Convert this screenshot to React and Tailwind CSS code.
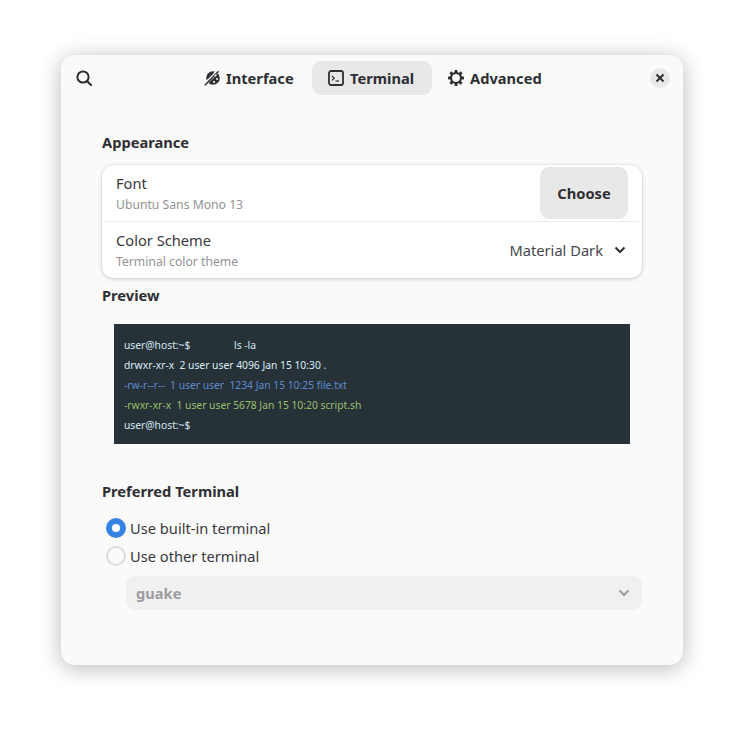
const font = { fontFamily: '"Noto Sans", sans-serif' };

function SearchIcon() {
  return (
    <svg width="16" height="16" viewBox="0 0 16 16" fill="none" stroke="#2e2e33" strokeWidth="2" strokeLinecap="round">
      <circle cx="7" cy="7" r="5.6" />
      <path d="M11.200 11.200l3.800 3.800" />
    </svg>
  );
}

function PaletteIcon() {
  return (
    <svg width="16" height="16" viewBox="0 0 16 16">
      <circle cx="9" cy="8" r="6.800" fill="#2e2e33" />
      <path stroke="#fafafa" strokeWidth="3.600" d="M0 15 15 0" fill="none" />
      <path stroke="#2e2e33" strokeWidth="1.500" d="M.8 15.200 14.600 1.200" fill="none" />
      <path stroke="#2e2e33" strokeWidth="1.200" d="M3 9 9.500 2.500" fill="none" />
      <circle cx="11.500" cy="5.500" r="1" fill="#fafafa" />
      <circle cx="13" cy="9" r="1" fill="#fafafa" />
      <circle cx="10" cy="12" r="1.100" fill="#fafafa" />
    </svg>
  );
}

function TerminalIcon() {
  return (
    <svg width="16" height="16" viewBox="0 0 16 16" fill="none" stroke="#2e2e33">
      <rect x="1" y="1" width="14" height="14" rx="2" strokeWidth="1.800" />
      <path d="M4 6 6.200 8.200 4 10.400" strokeWidth="1.200" />
      <path d="M7.500 11H11" strokeWidth="1.200" />
    </svg>
  );
}

function GearIcon() {
  return (
    <svg width="16" height="16" viewBox="0 0 16 16">
      <circle cx="8" cy="8" r="5" fill="none" stroke="#2e2e33" strokeWidth="2.200" />
      {[0, 45, 90, 135, 180, 225, 270, 315].map((a) => (
        <rect key={a} x="6.600" y="0" width="2.800" height="3.500" fill="#2e2e33" transform={`rotate(${a} 8 8)`} />
      ))}
    </svg>
  );
}

function Chevron({ color = "#2e2e33" }) {
  return (
    <svg width="12" height="8" viewBox="0 0 12 8" fill="none" stroke={color} strokeWidth="2">
      <path d="M1.500 1.500 6 6l4.500-4.500" />
    </svg>
  );
}

function Tab({ icon, label, active, className }) {
  return (
    <div className={`flex h-[34px] items-center gap-1.5 rounded-[9px] pl-4 text-[14.670px] font-bold text-[#2e2e33] ${active ? "bg-[#e8e8e8]" : ""} ${className}`}>
      {icon}
      <span>{label}</span>
    </div>
  );
}

function Radio({ checked, label }) {
  return (
    <div className="flex h-7 items-center gap-1 pl-1">
      {checked ? (
        <span className="flex h-5 w-5 items-center justify-center rounded-full bg-[#3584e4]">
          <span className="h-2 w-2 rounded-full bg-white" />
        </span>
      ) : (
        <span className="h-5 w-5 rounded-full border-2 border-[#dcdcdc]" />
      )}
      <span className="text-[14.670px] text-[#38383c]">{label}</span>
    </div>
  );
}

export default function App() {
  return (
    <div style={font} className="h-[732px] w-[744px] bg-white pt-[55px] pl-[61px]">
      <div className="h-[610px] w-[622px] rounded-[14px] bg-[#fafafa] shadow-[0_3px_22px_rgba(0,0,0,0.28)]">
        <div className="grid h-[46px] grid-cols-[1fr_auto_1fr] items-center pr-[13px] pl-[15px]">
          <div className="flex"><SearchIcon /></div>
          <div className="flex items-center">
            <Tab icon={<PaletteIcon />} label="Interface" className="w-[124px]" />
            <Tab icon={<TerminalIcon />} label="Terminal" active className="w-[120px]" />
            <Tab icon={<GearIcon />} label="Advanced" className="w-[126px]" />
          </div>
          <div className="flex justify-end">
            <div className="flex h-5 w-5 items-center justify-center rounded-full bg-[#e8e8e8]">
              <svg width="10" height="10" viewBox="0 0 10 10" stroke="#2e2e33" strokeWidth="2">
                <path d="M1.500 1.500l7 7M8.500 1.500l-7 7" />
              </svg>
            </div>
          </div>
        </div>

        <div className="px-[41px] pt-[31px]">
          <h2 className="text-[14.670px] leading-5 font-bold text-[#2e2e33]">Appearance</h2>

          <div className="mt-[13px] overflow-hidden rounded-xl bg-white shadow-[0_0_0_1px_rgba(0,0,0,0.04),0_1px_4px_rgba(0,0,0,0.16)]">
            <div className="flex h-[57px] items-center justify-between border-b border-[#ececec] pr-[14px] pl-[14px]">
              <div>
                <div className="text-[14.670px] leading-5 text-[#38383c]">Font</div>
                <div className="mt-[3px] text-[12.200px] leading-[18px] text-[#929295]">Ubuntu Sans Mono 13</div>
              </div>
              <button className="flex h-[52px] w-[88px] items-center justify-center rounded-[9px] bg-[#e8e8e8] text-[14.670px] font-bold text-[#2e2e33]">Choose</button>
            </div>
            <div className="flex h-[56px] items-center justify-between pr-4 pl-[14px]">
              <div>
                <div className="text-[14.670px] leading-5 text-[#38383c]">Color Scheme</div>
                <div className="mt-[3px] text-[12.200px] leading-[18px] text-[#929295]">Terminal color theme</div>
              </div>
              <div className="flex items-center gap-[11px] text-[14.670px] text-[#47474b]">
                <span>Material Dark</span>
                <Chevron />
              </div>
            </div>
          </div>

          <h2 className="mt-[7px] text-[14.670px] leading-5 font-bold text-[#2e2e33]">Preview</h2>

          <div className="mx-3 mt-[19px] h-[120px] bg-[#263238] px-2.5 py-[11px] text-[10.300px] leading-5">
            <div className="flex text-[#d5e8f5]"><span className="w-[110px]">user@host:~$</span><span>ls -la</span></div>
            <div className="whitespace-pre text-[#dcecf7]">drwxr-xr-x  2 user user 4096 Jan 15 10:30 .</div>
            <div className="whitespace-pre text-[#5f8ad0]">-rw-r--r--  1 user user  1234 Jan 15 10:25 file.txt</div>
            <div className="whitespace-pre text-[#9abf6a]">-rwxr-xr-x  1 user user 5678 Jan 15 10:20 script.sh</div>
            <div className="text-[#d5e8f5]">user@host:~$</div>
          </div>

          <h2 className="mt-[37px] text-[14.670px] leading-5 font-bold text-[#2e2e33]">Preferred Terminal</h2>

          <div className="mt-[13px]">
            <Radio checked label="Use built-in terminal" />
            <Radio label="Use other terminal" />
          </div>

          <div className="mt-[6px] ml-6 flex h-[34px] items-center justify-between rounded-[9px] bg-[#f0f0f0] pr-3 pl-2.5 text-[14.670px] font-bold text-[#9c9c9e]">
            <span>guake</span>
            <Chevron color="#9c9c9e" />
          </div>
        </div>
      </div>
    </div>
  );
}
